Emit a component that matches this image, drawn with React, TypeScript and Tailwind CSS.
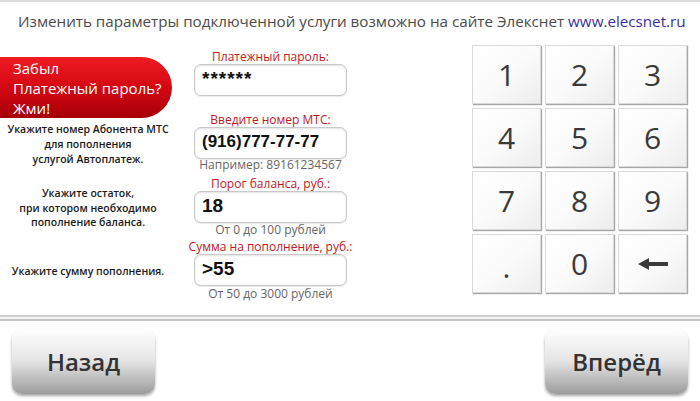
import React from 'react';

const sans = "font-['Open_Sans','Noto_Sans',sans-serif]";
const arial = "font-['Liberation_Sans',Arial,sans-serif]";

function Field({ value, size }: { value: string; size: string }) {
  return (
    <div
      className={`h-[32px] w-[153px] rounded-[7px] border-[1.5px] border-[#c9c9c9] bg-white px-[7px] pt-[1px] font-bold leading-[26px] text-[#111] shadow-[inset_0_1px_2px_rgba(0,0,0,0.12),0_1px_1px_rgba(0,0,0,0.08)] ${arial} ${size}`}
    >
      {value}
    </div>
  );
}

function Key({ children }: { children: React.ReactNode }) {
  return (
    <button className="flex h-[59px] w-[69px] items-center justify-center border border-[#dadada] bg-gradient-to-br from-white via-[#fbfbfb] to-[#ededed] text-[30px] font-medium text-[#3a3a3a] shadow-[1px_1px_1px_rgba(0,0,0,0.35)]">
      {children}
    </button>
  );
}

function NavButton({ label }: { label: string }) {
  return (
    <button className="h-[65px] w-[143px] rounded-[10px] bg-gradient-to-b from-[#fefefe] via-[#e4e4e4] to-[#9c9c9c] text-[24px] font-semibold text-[#333] shadow-[0_2px_3px_rgba(0,0,0,0.35)]">
      {label}
    </button>
  );
}

export default function App() {
  const keys = ['1', '2', '3', '4', '5', '6', '7', '8', '9', '.', '0'];

  return (
    <div className={`h-[401px] w-[700px] overflow-hidden border-t-2 border-[#dcdcdc] bg-white ${sans}`}>
      <div className="h-[43px] pl-[18px] pt-[9px] text-[15.2px] leading-[20px] text-[#4a4a4a]">
        Изменить параметры подключенной услуги возможно на сайте Элекснет{' '}
        <span className="text-[#3b2f9c]">www.elecsnet.ru</span>
      </div>

      <div className="flex h-[270px]">
        <div className="w-[180px] pt-[12px]">
          <button className="block h-[61px] w-[172px] rounded-r-full bg-gradient-to-b from-[#f01a22] via-[#d40812] to-[#a60008] pl-[13px] pt-[1px] text-left text-[15px] leading-[20px] text-white">
            Забыл
            <br />
            Платежный пароль?
            <br />
            Жми!
          </button>
          <p className="mt-[4px] w-[176px] text-center text-[10.5px] font-semibold leading-[15px] text-[#1a1a1a]">
            Укажите номер Абонента МТС
            <br />
            для пополнения
            <br />
            услугой Автоплатеж.
          </p>
          <p className="mt-[19px] w-[176px] text-center text-[10.5px] font-semibold leading-[14.5px] text-[#1a1a1a]">
            Укажите остаток,
            <br />
            при котором необходимо
            <br />
            пополнение баланса.
          </p>
          <p className="mt-[34px] w-[176px] text-center text-[10.5px] font-semibold leading-[15px] text-[#1a1a1a]">
            Укажите сумму пополнения.
          </p>
        </div>

        <div className="ml-[14px] flex w-[153px] flex-col items-center pt-[4px] text-[12px]">
          <div className="h-[15px] leading-[15px] text-[#c3161d]">Платежный пароль:</div>
          <Field value="******" size="text-[19px] tracking-[1px]" />
          <div className="mt-[16px] h-[15px] leading-[15px] text-[#c3161d]">Введите номер МТС:</div>
          <Field value="(916)777-77-77" size="text-[17px]" />
          <div className="h-[12px] leading-[12px] text-[#666]">Например: 89161234567</div>
          <div className="mt-[5px] h-[15px] leading-[15px] text-[#c3161d]">Порог баланса, руб.:</div>
          <Field value="18" size="text-[19px]" />
          <div className="h-[14px] leading-[14px] text-[#666]">От 0 до 100 рублей</div>
          <div className="mt-[2px] h-[15px] whitespace-nowrap leading-[15px] text-[#c3161d]">Сумма на пополнение, руб.:</div>
          <Field value=">55" size="text-[19px]" />
          <div className="mt-[1px] h-[14px] leading-[14px] text-[#666]">От 50 до 3000 рублей</div>
        </div>

        <div className="ml-auto mr-[13px] grid h-fit grid-cols-[repeat(3,69px)] gap-[4px]">
          {keys.map((k) => (
            <Key key={k}>{k === '.' ? <span className="translate-y-[3px]">.</span> : k}</Key>
          ))}
          <Key>
            <svg width="30" height="12" viewBox="0 0 30 12">
              <polygon points="0,6 11,0 11,12" fill="#3a3a3a" />
              <rect x="9" y="4" width="21" height="4" fill="#3a3a3a" />
            </svg>
          </Key>
        </div>
      </div>

      <div className="h-[6px] border-y-2 border-t-[#cfcfcf] border-b-[#c4c4c4] bg-[#f4f4f4]" />

      <div className="flex justify-between pl-[12px] pr-[12px] pt-[8px]">
        <NavButton label="Назад" />
        <NavButton label="Вперёд" />
      </div>
    </div>
  );
}
